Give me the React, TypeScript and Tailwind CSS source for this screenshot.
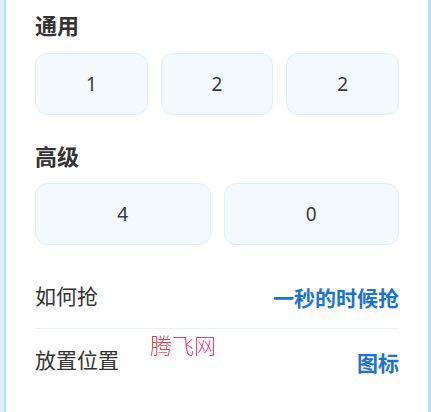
import React from "react";

const font = { fontFamily: '"Noto Sans", "Noto Sans CJK SC", sans-serif' };

function Box({ v }: { v: string }) {
  return (
    <div className="flex h-[62px] flex-1 items-center justify-center rounded-[12px] border border-[#dff0f9] bg-[#f3f9fd] text-[19px] font-normal text-[#3a3a3a]">
      {v}
    </div>
  );
}

export default function App() {
  return (
    <div className="flex h-[412px] w-[431px] bg-[#dcefff] pl-[4px]" style={font}>
      <div className="relative flex-1 border-l-2 border-r-[3px] border-[#b3e0fc] bg-white px-[29px] pt-[11px]">
        <div className="text-[22px] font-bold leading-[28px] text-[#333333]">通用</div>
        <div className="mt-[14px] flex gap-[13px]">
          <Box v="1" />
          <Box v="2" />
          <Box v="2" />
        </div>
        <div className="mt-[27px] text-[22px] font-bold leading-[28px] text-[#333333]">高级</div>
        <div className="mt-[13px] flex gap-[13px]">
          <Box v="4" />
          <Box v="0" />
        </div>
        <div className="mt-[20px] flex h-[64px] items-center justify-between border-b border-[#e8f3fc]">
          <span className="text-[21px] text-[#333333]">如何抢</span>
          <span className="pt-[5px] text-[21px] font-bold text-[#1a73d0]">一秒的时候抢</span>
        </div>
        <div className="flex h-[64px] items-center justify-between">
          <span className="text-[21px] text-[#333333]">放置位置</span>
          <span className="pt-[6px] text-[21px] font-bold text-[#1a73d0]">图标</span>
        </div>
        <div
          className="absolute left-[144px] top-[330px] bg-gradient-to-r from-[#f03a3a] to-[#e83a8c] bg-clip-text text-[22px] font-light leading-[28px] text-transparent"
          style={{ fontFamily: '"Noto Sans CJK SC", sans-serif' }}
        >
          腾飞网
        </div>
      </div>
    </div>
  );
}
